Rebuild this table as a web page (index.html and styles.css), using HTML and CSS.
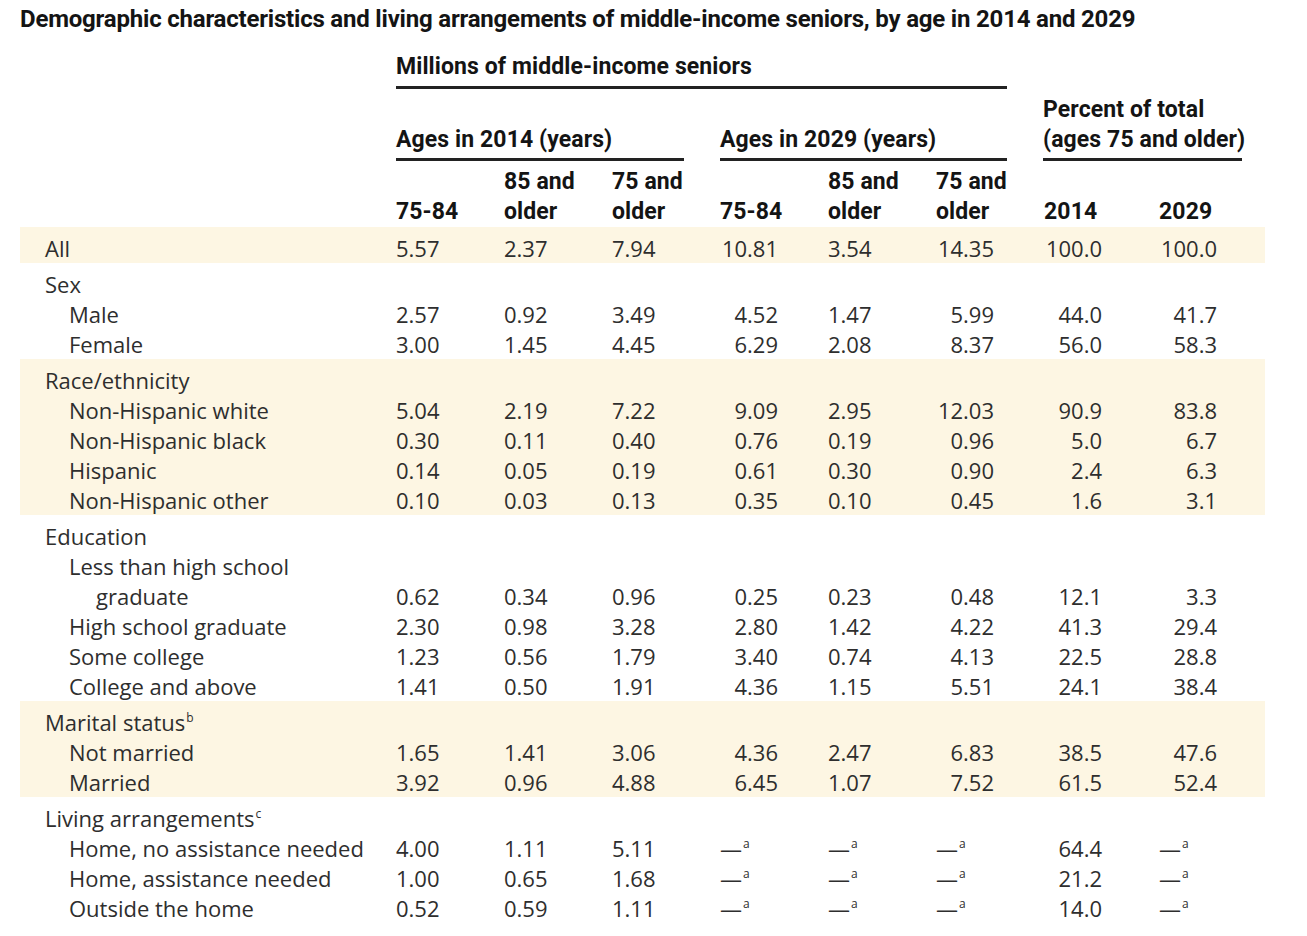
FILE: index.html
```html
<!DOCTYPE html>
<html lang="en">
<head>
<meta charset="utf-8">
<title>Demographic characteristics of middle-income seniors</title>
<link rel="stylesheet" href="styles.css">
</head>
<body>
<div class="page">
  <h1 class="title">Demographic characteristics and living arrangements of middle-income seniors, by age in 2014 and 2029</h1>
  <table class="data">
    <colgroup>
      <col class="c-label"><col class="c-num"><col class="c-num"><col class="c-num"><col class="c-num"><col class="c-num"><col class="c-num"><col class="c-p1"><col class="c-p2">
    </colgroup>
    <thead>
      <tr class="h1">
        <th></th>
        <th colspan="6"><div class="rule rule-millions">Millions of middle-income seniors</div></th>
        <th colspan="2"></th>
      </tr>
      <tr class="h2">
        <th></th>
        <th colspan="3"><div class="rule rule-g1">Ages in 2014 (years)</div></th>
        <th colspan="3"><div class="rule rule-g2">Ages in 2029 (years)</div></th>
        <th colspan="2"><div class="rule rule-pct">Percent of total<br>(ages 75 and older)</div></th>
      </tr>
      <tr class="h3">
        <th></th>
        <th>75-84</th><th>85 and<br>older</th><th>75 and<br>older</th>
        <th>75-84</th><th>85 and<br>older</th><th>75 and<br>older</th>
        <th>2014</th><th>2029</th>
      </tr>
    </thead>
    <tbody class="shade">
      <tr><td class="cat">All</td><td>5.57</td><td>2.37</td><td>7.94</td><td class="r"><span class="n">10.81</span></td><td>3.54</td><td class="r"><span class="n">14.35</span></td><td class="r"><span class="n">100.0</span></td><td class="r"><span class="n">100.0</span></td></tr>
    </tbody>
    <tbody>
      <tr><td class="cat">Sex</td><td></td><td></td><td></td><td></td><td></td><td></td><td></td><td></td></tr>
      <tr><td class="sub">Male</td><td>2.57</td><td>0.92</td><td>3.49</td><td class="r"><span class="n">4.52</span></td><td>1.47</td><td class="r"><span class="n">5.99</span></td><td class="r"><span class="n">44.0</span></td><td class="r"><span class="n">41.7</span></td></tr>
      <tr><td class="sub">Female</td><td>3.00</td><td>1.45</td><td>4.45</td><td class="r"><span class="n">6.29</span></td><td>2.08</td><td class="r"><span class="n">8.37</span></td><td class="r"><span class="n">56.0</span></td><td class="r"><span class="n">58.3</span></td></tr>
    </tbody>
    <tbody class="shade">
      <tr><td class="cat">Race/ethnicity</td><td></td><td></td><td></td><td></td><td></td><td></td><td></td><td></td></tr>
      <tr><td class="sub">Non-Hispanic white</td><td>5.04</td><td>2.19</td><td>7.22</td><td class="r"><span class="n">9.09</span></td><td>2.95</td><td class="r"><span class="n">12.03</span></td><td class="r"><span class="n">90.9</span></td><td class="r"><span class="n">83.8</span></td></tr>
      <tr><td class="sub">Non-Hispanic black</td><td>0.30</td><td>0.11</td><td>0.40</td><td class="r"><span class="n">0.76</span></td><td>0.19</td><td class="r"><span class="n">0.96</span></td><td class="r"><span class="n">5.0</span></td><td class="r"><span class="n">6.7</span></td></tr>
      <tr><td class="sub">Hispanic</td><td>0.14</td><td>0.05</td><td>0.19</td><td class="r"><span class="n">0.61</span></td><td>0.30</td><td class="r"><span class="n">0.90</span></td><td class="r"><span class="n">2.4</span></td><td class="r"><span class="n">6.3</span></td></tr>
      <tr><td class="sub">Non-Hispanic other</td><td>0.10</td><td>0.03</td><td>0.13</td><td class="r"><span class="n">0.35</span></td><td>0.10</td><td class="r"><span class="n">0.45</span></td><td class="r"><span class="n">1.6</span></td><td class="r"><span class="n">3.1</span></td></tr>
    </tbody>
    <tbody>
      <tr><td class="cat">Education</td><td></td><td></td><td></td><td></td><td></td><td></td><td></td><td></td></tr>
      <tr><td class="sub">Less than high school</td><td></td><td></td><td></td><td></td><td></td><td></td><td></td><td></td></tr>
      <tr><td class="cont">graduate</td><td>0.62</td><td>0.34</td><td>0.96</td><td class="r"><span class="n">0.25</span></td><td>0.23</td><td class="r"><span class="n">0.48</span></td><td class="r"><span class="n">12.1</span></td><td class="r"><span class="n">3.3</span></td></tr>
      <tr><td class="sub">High school graduate</td><td>2.30</td><td>0.98</td><td>3.28</td><td class="r"><span class="n">2.80</span></td><td>1.42</td><td class="r"><span class="n">4.22</span></td><td class="r"><span class="n">41.3</span></td><td class="r"><span class="n">29.4</span></td></tr>
      <tr><td class="sub">Some college</td><td>1.23</td><td>0.56</td><td>1.79</td><td class="r"><span class="n">3.40</span></td><td>0.74</td><td class="r"><span class="n">4.13</span></td><td class="r"><span class="n">22.5</span></td><td class="r"><span class="n">28.8</span></td></tr>
      <tr><td class="sub">College and above</td><td>1.41</td><td>0.50</td><td>1.91</td><td class="r"><span class="n">4.36</span></td><td>1.15</td><td class="r"><span class="n">5.51</span></td><td class="r"><span class="n">24.1</span></td><td class="r"><span class="n">38.4</span></td></tr>
    </tbody>
    <tbody class="shade">
      <tr><td class="cat">Marital status<sup>b</sup></td><td></td><td></td><td></td><td></td><td></td><td></td><td></td><td></td></tr>
      <tr><td class="sub">Not married</td><td>1.65</td><td>1.41</td><td>3.06</td><td class="r"><span class="n">4.36</span></td><td>2.47</td><td class="r"><span class="n">6.83</span></td><td class="r"><span class="n">38.5</span></td><td class="r"><span class="n">47.6</span></td></tr>
      <tr><td class="sub">Married</td><td>3.92</td><td>0.96</td><td>4.88</td><td class="r"><span class="n">6.45</span></td><td>1.07</td><td class="r"><span class="n">7.52</span></td><td class="r"><span class="n">61.5</span></td><td class="r"><span class="n">52.4</span></td></tr>
    </tbody>
    <tbody>
      <tr><td class="cat">Living arrangements<sup>c</sup></td><td></td><td></td><td></td><td></td><td></td><td></td><td></td><td></td></tr>
      <tr><td class="sub">Home, no assistance needed</td><td>4.00</td><td>1.11</td><td>5.11</td><td class="dash">—<sup>a</sup></td><td class="dash">—<sup>a</sup></td><td class="dash">—<sup>a</sup></td><td class="r"><span class="n">64.4</span></td><td class="dash">—<sup>a</sup></td></tr>
      <tr><td class="sub">Home, assistance needed</td><td>1.00</td><td>0.65</td><td>1.68</td><td class="dash">—<sup>a</sup></td><td class="dash">—<sup>a</sup></td><td class="dash">—<sup>a</sup></td><td class="r"><span class="n">21.2</span></td><td class="dash">—<sup>a</sup></td></tr>
      <tr><td class="sub">Outside the home</td><td>0.52</td><td>0.59</td><td>1.11</td><td class="dash">—<sup>a</sup></td><td class="dash">—<sup>a</sup></td><td class="dash">—<sup>a</sup></td><td class="r"><span class="n">14.0</span></td><td class="dash">—<sup>a</sup></td></tr>
    </tbody>
  </table>
</div>
</body>
</html>
```

FILE: styles.css
```css
html, body {
  margin: 0;
  padding: 0;
  background: #ffffff;
}

.page {
  padding: 4px 0 0 20px;
  width: 1245px;
}

.title,
.data th {
  font-family: "Roboto", "Liberation Sans", sans-serif;
  font-weight: 700;
  color: #141414;
}

.title {
  margin: 0;
  font-size: 24px;
  letter-spacing: -0.2px;
  line-height: 30px;
  white-space: nowrap;
}

.data {
  margin-top: 18px;
  width: 1245px;
  border-collapse: collapse;
  border-spacing: 0;
  table-layout: fixed;
  font-family: "Open Sans", "Noto Sans", sans-serif;
  font-weight: 400;
  font-size: 22px;
  color: #2e2e2e;
}

.c-label { width: 376px; }
.c-num { width: 108px; }
.c-p1 { width: 115px; }
.c-p2 { width: 106px; }

.data th {
  padding: 0;
  text-align: left;
  vertical-align: bottom;
  font-size: 23px;
  letter-spacing: 0.1px;
  line-height: 30px;
  white-space: nowrap;
}

.rule {
  border-bottom: 3px solid #222222;
}

.rule-millions {
  padding-bottom: 4px;
  margin-right: 37px;
}

.h2 th {
  padding-top: 6px;
}

.rule-g1 {
  padding-bottom: 3px;
  margin-right: 36px;
}

.rule-g2 {
  padding-bottom: 3px;
  margin-right: 37px;
}

.rule-pct {
  padding-bottom: 3px;
  margin-left: -1px;
  margin-right: 23px;
}

.h3 th {
  padding-top: 6px;
}

.data td {
  padding: 0;
  line-height: 30px;
  height: 30px;
  white-space: nowrap;
  vertical-align: middle;
}

.data tbody tr:first-child td {
  padding-top: 6px;
}

.shade td {
  background: #fdf6e3;
}

.data td.cat {
  padding-left: 25px;
}

.data td.sub {
  padding-left: 49px;
}

.data td.cont {
  padding-left: 76px;
}

.n {
  display: inline-block;
  width: 58px;
  text-align: right;
}

.dash sup,
.cat sup {
  font-size: 12px;
  line-height: 0;
  vertical-align: 9px;
  margin-left: 1px;
}
```
